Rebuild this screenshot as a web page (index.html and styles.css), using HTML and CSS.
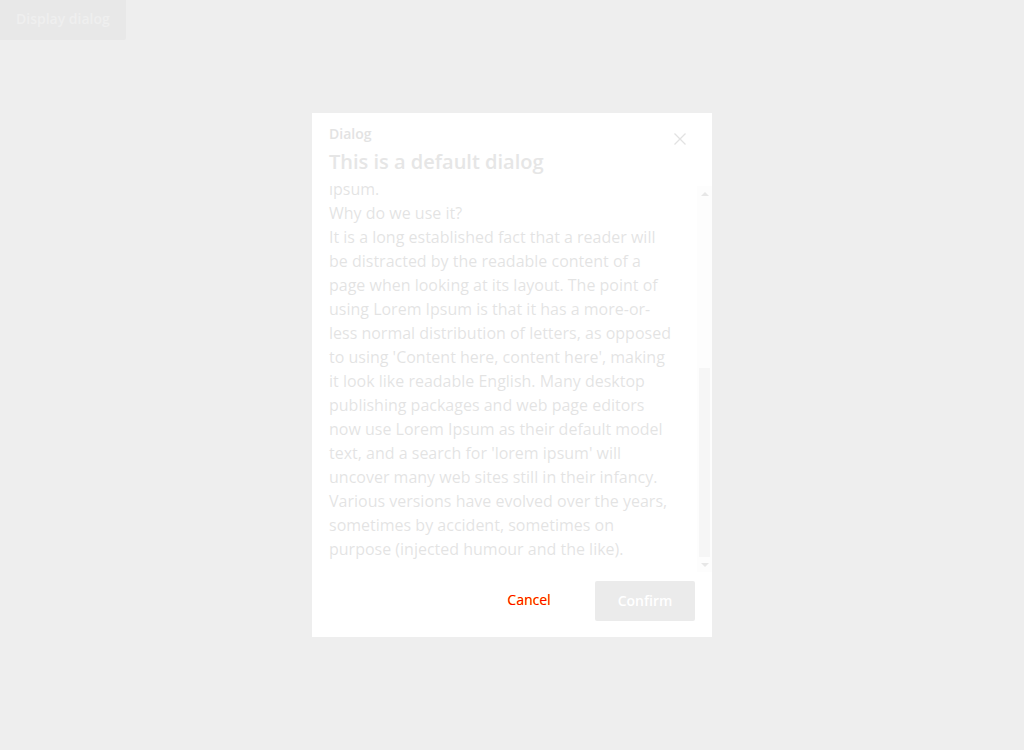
FILE: index.html
```html
<!DOCTYPE html>
<html>
<head>
<meta charset="utf-8">
<link rel="stylesheet" href="styles.css">
</head>
<body>
<button class="open-btn">Display dialog</button>
<div class="overlay">
  <div class="dialog">
    <div class="dialog-header">
      <div class="header-text">
        <div class="label">Dialog</div>
        <div class="title">This is a default dialog</div>
      </div>
      <button class="close-btn" aria-label="Close">
        <svg width="12" height="12" viewBox="0 0 12 12"><path d="M0.5 0.5 L11.5 11.5 M11.5 0.5 L0.5 11.5" stroke="#e2e2e2" stroke-width="1.3" fill="none"/></svg>
      </button>
    </div>
    <div class="dialog-body">
      <div class="viewport" id="viewport">
        <div class="content">
          <p>What is Lorem Ipsum?</p>
          <p>Lorem Ipsum is simply dummy text of the printing and typesetting industry. Lorem Ipsum has been the industry's standard dummy text ever since the 1500s, when an unknown printer took a galley of type and scrambled it to make a type specimen book. It has survived not only five centuries, but also the leap into electronic typesetting, remaining essentially unchanged. It was popularised in the 1960s with the release of Letraset sheets containing Lorem Ipsum passages, and more recently with desktop publishing software like Aldus PageMaker including versions of Lorem<br>ipsum.</p>
          <p>Why do we use it?</p>
          <p>It is a long established fact that a reader will be distracted by the readable content of a page when looking at its layout. The point of using Lorem Ipsum is that it has a more-or-less normal distribution of letters, as opposed to using 'Content here, content here', making it look like readable English. Many desktop publishing packages and web page editors now use Lorem Ipsum as their default model text, and a search for 'lorem ipsum' will uncover many web sites still in their infancy. Various versions have evolved over the years, sometimes by accident, sometimes on purpose (injected humour and the like).</p>
        </div>
      </div>
      <div class="scrollbar">
        <div class="sb-btn"><span class="arrow-up"></span></div>
        <div class="sb-track"><div class="sb-thumb"></div></div>
        <div class="sb-btn"><span class="arrow-down"></span></div>
      </div>
    </div>
    <div class="dialog-footer">
      <button class="btn btn-cancel">Cancel</button>
      <button class="btn btn-confirm">Confirm</button>
    </div>
  </div>
</div>
<script src="script.js"></script>
</body>
</html>
```
FILE: styles.css
```css
html, body {
  margin: 0;
  padding: 0;
  height: 100%;
}
body {
  background: #eeeeee;
  font-family: "Open Sans", "Liberation Sans", sans-serif;
}
button {
  font-family: "Open Sans", "Liberation Sans", sans-serif;
  border: none;
  cursor: pointer;
}
.open-btn {
  display: block;
  height: 40px;
  padding: 0 16px 3px 16px;
  background: #e8e8e8;
  color: #efefef;
  font-size: 14px;
  font-weight: 600;
  border-radius: 0 0 2px 0;
}
.overlay {
  position: fixed;
  inset: 0;
  display: flex;
  align-items: center;
  justify-content: center;
}
.dialog {
  width: 400px;
  background: #ffffff;
  display: flex;
  flex-direction: column;
}
.dialog-header {
  display: flex;
  justify-content: space-between;
  align-items: flex-start;
  padding: 11px 16px 0 17px;
}
.label {
  font-size: 14px;
  font-weight: 600;
  line-height: 20px;
  color: #e3e3e3;
}
.title {
  margin-top: 4px;
  font-size: 20px;
  font-weight: 600;
  line-height: 28px;
  color: #e6e6e6;
}
.close-btn {
  background: transparent;
  width: 12px;
  height: 12px;
  padding: 0;
  margin-top: 9px;
  margin-right: 10px;
  display: flex;
}
.dialog-body {
  margin-top: 10px;
  height: 386px;
  display: flex;
  opacity: 0.13;
  color: #333333;
}
.viewport {
  flex: 1;
  overflow: hidden;
}
.content {
  padding: 0 20px 11px 17px;
  font-size: 16px;
  line-height: 24px;
}
.content p {
  margin: 0;
}
.scrollbar {
  width: 15px;
  background: #f1f1f1;
  display: flex;
  flex-direction: column;
}
.sb-btn {
  height: 15px;
  display: flex;
  align-items: center;
  justify-content: center;
}
.arrow-up {
  width: 0;
  height: 0;
  border-left: 4px solid transparent;
  border-right: 4px solid transparent;
  border-bottom: 4px solid #505050;
}
.arrow-down {
  width: 0;
  height: 0;
  border-left: 4px solid transparent;
  border-right: 4px solid transparent;
  border-top: 4px solid #505050;
}
.sb-track {
  flex: 1;
  display: flex;
  flex-direction: column;
  justify-content: flex-end;
  padding: 0 2px;
}
.sb-thumb {
  height: 189px;
  background: #c1c1c1;
}
.dialog-footer {
  display: flex;
  justify-content: flex-end;
  gap: 16px;
  padding: 9px 17px 16px 16px;
}
.btn {
  width: 100px;
  height: 40px;
  padding: 0 0 2px 0;
  font-size: 14px;
  font-weight: 600;
  border-radius: 2px;
}
.btn-cancel {
  background: transparent;
  color: #ff0000;
  font-weight: 400;
  line-height: 38px;
  text-shadow: 0.5px 0 0 #ffff00;
}
.btn-confirm {
  background: #ebebeb;
  color: #ffffff;
}
```
FILE: script.js
```js
var v = document.getElementById('viewport');
v.scrollTop = v.scrollHeight;
```
